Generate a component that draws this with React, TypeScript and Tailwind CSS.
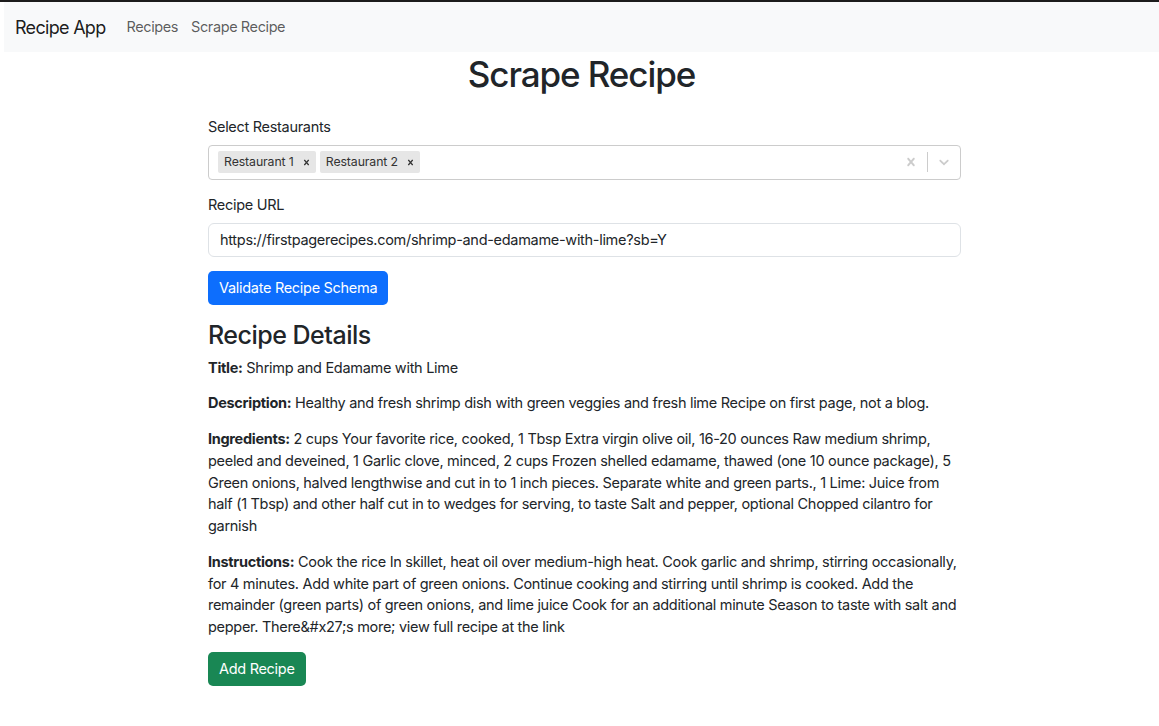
import React from "react";

const font = { fontFamily: 'Inter, "Noto Sans", "Liberation Sans", sans-serif' };

const xPath =
  "M14.348 14.849c-.469.469-1.229.469-1.697 0L10 11.819l-2.651 3.029c-.469.469-1.229.469-1.697 0-.469-.469-.469-1.229 0-1.697l2.758-3.15-2.759-3.152c-.469-.469-.469-1.228 0-1.697.469-.469 1.228-.469 1.697 0L10 8.183l2.651-3.031c.469-.469 1.228-.469 1.697 0 .469.469.469 1.229 0 1.697l-2.758 3.152 2.758 3.15c.469.469.469 1.229 0 1.698z";

function Chip({ label }: { label: string }) {
  return (
    <div className="flex items-center bg-[#e6e6e6] rounded-[2px] h-[22px] mr-[4px]">
      <span className="text-[12.3px] tracking-[-0.1px] text-[#333] pl-[6px] pr-[4px]">{label}</span>
      <span className="flex items-center justify-center w-[18px] h-full text-[#333]">
        <svg width="11" height="11" viewBox="0 0 20 20" fill="currentColor">
          <path d={xPath} />
        </svg>
      </span>
    </div>
  );
}

export default function App() {
  return (
    <div className="min-h-[726px] bg-white text-[#212529] tracking-[-0.3px]" style={font}>
      <div className="h-[2px] bg-[#1c1c1c]" />
      <nav className="ml-[4px] h-[50px] bg-[#f8f9fa] flex items-center pl-[11px]">
        <span className="text-[18px] text-[#000000e6] mr-[21px] tracking-[-0.7px]">Recipe App</span>
        <span className="text-[14.5px] text-[#000000a6] mr-[13px] tracking-[-0.4px]">Recipes</span>
        <span className="text-[14.5px] text-[#000000a6] tracking-[-0.4px]">Scrape Recipe</span>
      </nav>
      <div className="pl-[4px]">
        <h1 className="text-center text-[35px] font-medium leading-[43px] mt-[1px] tracking-[-1.1px]">Scrape Recipe</h1>
        <div className="w-[753px] ml-[204px] mt-[20px] text-[14.5px] leading-[21.75px]">
          <label className="block">Select Restaurants</label>
          <div className="mt-[7px] h-[35px] border border-[#cccccc] rounded-[4px] flex items-center">
            <div className="flex-1 flex items-center pl-[9px]">
              <Chip label="Restaurant 1" />
              <Chip label="Restaurant 2" />
            </div>
            <div className="flex items-center h-full">
              <span className="text-[#cccccc] px-[8px] flex items-center">
                <svg width="16" height="16" viewBox="0 0 20 20" fill="currentColor">
                  <path d={xPath} />
                </svg>
              </span>
              <span className="w-px h-[20px] bg-[#cccccc]" />
              <span className="text-[#cccccc] px-[8px] flex items-center">
                <svg width="16" height="16" viewBox="0 0 20 20" fill="currentColor">
                  <path d="M4.516 7.548c0.436-0.446 1.043-0.481 1.576 0l3.908 3.747 3.908-3.747c0.533-0.481 1.141-0.446 1.574 0 0.436 0.445 0.408 1.197 0 1.615-0.406 0.418-4.695 4.502-4.695 4.502-0.217 0.223-0.502 0.335-0.787 0.335s-0.57-0.112-0.789-0.335c0 0-4.287-4.084-4.695-4.502s-0.436-1.17 0-1.615z" />
                </svg>
              </span>
            </div>
          </div>
          <label className="block mt-[14px]">Recipe URL</label>
          <div className="mt-[7px] h-[34px] border border-[#dee2e6] rounded-[6px] flex items-center px-[11px]">
            https://firstpagerecipes.com/shrimp-and-edamame-with-lime?sb=Y
          </div>
          <button className="mt-[14px] h-[34px] px-[11px] rounded-[5px] bg-[#0d6efd] text-white text-[14.5px]">
            Validate Recipe Schema
          </button>
          <h2 className="mt-[15px] text-[25px] font-medium leading-[30px] tracking-[-0.5px]">Recipe Details</h2>
          <div className="mt-[7px]">
            <p className="mb-[14px]"><b className="font-bold">Title:</b> Shrimp and Edamame with Lime</p>
            <p className="mb-[14px]"><b className="font-bold">Description:</b> Healthy and fresh shrimp dish with green veggies and fresh lime Recipe on first page, not a blog.</p>
            <p className="mb-[14px]"><b className="font-bold">Ingredients:</b> 2 cups Your favorite rice, cooked, 1 Tbsp Extra virgin olive oil, 16-20 ounces Raw medium shrimp, peeled and deveined, 1 Garlic clove, minced, 2 cups Frozen shelled edamame, thawed (one 10 ounce package), 5 Green onions, halved lengthwise and cut in to 1 inch pieces. Separate white and green parts., 1 Lime: Juice from half (1 Tbsp) and other half cut in to wedges for serving, to taste Salt and pepper, optional Chopped cilantro for garnish</p>
            <p className="mb-[14px]"><b className="font-bold">Instructions:</b> Cook the rice In skillet, heat oil over medium-high heat. Cook garlic and shrimp, stirring occasionally, for 4 minutes. Add white part of green onions. Continue cooking and stirring until shrimp is cooked. Add the remainder (green parts) of green onions, and lime juice Cook for an additional minute Season to taste with salt and pepper. There&amp;#x27;s more; view full recipe at the link</p>
          </div>
          <button className="h-[34px] px-[11px] rounded-[5px] bg-[#198754] text-white text-[14.5px]">
            Add Recipe
          </button>
        </div>
      </div>
    </div>
  );
}
